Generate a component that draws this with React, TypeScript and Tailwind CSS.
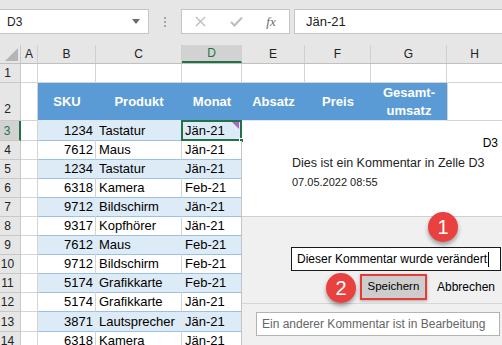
import React from "react";

const rows: [string, string, string][] = [
  ["1234", "Tastatur", "Jän-21"],
  ["7612", "Maus", "Jän-21"],
  ["1234", "Tastatur", "Jän-21"],
  ["6318", "Kamera", "Feb-21"],
  ["9712", "Bildschirm", "Jän-21"],
  ["9317", "Kopfhörer", "Jän-21"],
  ["7612", "Maus", "Feb-21"],
  ["9712", "Bildschirm", "Feb-21"],
  ["5174", "Grafikkarte", "Feb-21"],
  ["5174", "Grafikkarte", "Jän-21"],
  ["3871", "Lautsprecher", "Jän-21"],
  ["6318", "Kamera", "Jän-21"],
];

const heights = [20, 19, 19, 19, 19, 19, 19, 19, 19, 19, 20, 19];

function Badge({ n, className }: { n: string; className: string }) {
  return (
    <div
      className={
        "absolute w-[30px] h-[30px] rounded-full bg-[#e9413f] text-white text-[20px] leading-none flex items-center justify-center shadow-[0_3px_4px_rgba(0,0,0,0.35)] " +
        className
      }
    >
      {n}
    </div>
  );
}

export default function App() {
  return (
    <div className="relative w-[502px] h-[345px] overflow-hidden bg-white font-['Liberation_Sans',Arial,sans-serif] text-black">
      {/* Formula bar */}
      <div className="h-[45px] bg-[#e6e6e6] flex items-start pt-[9px]">
        <div className="w-[149px] h-[25px] bg-white border border-l-0 border-[#c6c6c6] flex items-center justify-between pl-[7px] pr-[8px] text-[12px] text-[#222]">
          <span>D3</span>
          <svg width="8" height="5" viewBox="0 0 8 5">
            <path d="M0 0 L8 0 L4 5 Z" fill="#6b6b6b" />
          </svg>
        </div>
        <div className="w-[32px] flex flex-col items-center gap-[2px] pt-[8px]">
          <div className="w-[2px] h-[2px] bg-[#a6a6a6]" />
          <div className="w-[2px] h-[2px] bg-[#a6a6a6]" />
          <div className="w-[2px] h-[2px] bg-[#a6a6a6]" />
        </div>
        <div className="w-[109px] h-[25px] bg-white border border-[#c6c6c6] flex items-center">
          <div className="w-[36px] flex justify-center">
            <svg width="11" height="11" viewBox="0 0 11 11">
              <path d="M1 1 L10 10 M10 1 L1 10" stroke="#bdbdbd" strokeWidth="1.4" />
            </svg>
          </div>
          <div className="w-[36px] flex justify-center">
            <svg width="13" height="11" viewBox="0 0 13 11">
              <path d="M1 6 L4.5 9.5 L12 1.5" stroke="#bdbdbd" strokeWidth="2" fill="none" />
            </svg>
          </div>
          <div className="w-[34px] flex justify-center font-['Liberation_Serif',serif] italic text-[13px] text-[#6a6a6a]">
            fx
          </div>
        </div>
        <div className="ml-[4px] flex-1 h-[25px] bg-white border border-r-0 border-[#c6c6c6] flex items-center pl-[11px] text-[13px] text-[#222]">
          Jän-21
        </div>
      </div>

      {/* Column headers */}
      <div className="h-[19px] flex bg-[#e6e6e6] text-[12px] text-[#222] border-b border-[#c0c0c0]">
        <div className="w-[21px] border-r border-[#c8c8c8] flex items-end justify-end pr-[2px] pb-[2px]">
          <svg width="13" height="13" viewBox="0 0 13 13">
            <path d="M13 0 L13 13 L0 13 Z" fill="#b5b5b5" />
          </svg>
        </div>
        <div className="w-[17px] border-r border-[#d0d0d0] flex items-center justify-center">A</div>
        <div className="w-[58px] border-r border-[#d0d0d0] flex items-center justify-center">B</div>
        <div className="w-[86px] border-r border-[#d0d0d0] flex items-center justify-center">C</div>
        <div className="w-[60px] border-r border-[#d0d0d0] bg-[#d2d2d2] border-b-2 border-b-[#217346] text-[#217346] flex items-center justify-center">
          D
        </div>
        <div className="w-[63px] border-r border-[#d0d0d0] flex items-center justify-center">E</div>
        <div className="w-[66px] border-r border-[#d0d0d0] flex items-center justify-center">F</div>
        <div className="w-[76px] border-r border-[#d0d0d0] flex items-center justify-center">G</div>
        <div className="flex-1 flex items-center justify-center">H</div>
      </div>

      {/* Row 1 */}
      <div className="h-[19px] flex">
        <div className="w-[21px] bg-[#e6e6e6] border-r border-b border-[#c8c8c8] text-[12px] text-[#222] flex items-center justify-center pr-[5px]">
          1
        </div>
        <div className="w-[17px] border-r border-b border-[#d4d4d4]" />
        <div className="w-[58px] border-r border-b border-[#d4d4d4]" />
        <div className="w-[86px] border-r border-b border-[#d4d4d4]" />
        <div className="w-[60px] border-r border-b border-[#d4d4d4]" />
        <div className="w-[63px] border-r border-b border-[#d4d4d4]" />
        <div className="w-[66px] border-r border-b border-[#d4d4d4]" />
        <div className="w-[76px] border-r border-b border-[#d4d4d4]" />
        <div className="flex-1 border-b border-[#d4d4d4]" />
      </div>

      {/* Row 2: table header */}
      <div className="h-[38px] flex">
        <div className="w-[21px] bg-[#e6e6e6] border-r border-b border-[#c8c8c8] text-[12px] text-[#222] flex items-end justify-center pr-[5px] pb-[2px]">
          2
        </div>
        <div className="w-[17px] border-r border-b border-[#d4d4d4]" />
        <div className="w-[409px] flex bg-[#5b9bd5] border-b border-[#dbe8f5] text-white font-bold text-[13px] leading-[18px]">
          <div className="w-[58px] flex items-center justify-center">SKU</div>
          <div className="w-[86px] flex items-center justify-center">Produkt</div>
          <div className="w-[60px] flex items-center justify-center">Monat</div>
          <div className="w-[63px] flex items-center justify-center">Absatz</div>
          <div className="w-[66px] flex items-center justify-center">Preis</div>
          <div className="w-[76px] flex flex-col items-center justify-center">
            <span>Gesamt-</span>
            <span>umsatz</span>
          </div>
        </div>
        <div className="flex-1 border-l border-b border-[#d4d4d4]" />
      </div>

      {/* Data rows + comment panel */}
      <div className="flex">
        <div className="w-[242px] flex flex-col text-[13px]">
          {rows.map((r, i) => {
            const n = i + 3;
            const striped = n % 2 === 1;
            const bg = striped ? "bg-[#ddebf7]" : "bg-white";
            const vr = striped ? "border-r-[#ddebf7]" : "border-r-[#d4d4d4]";
            const selected = n === 3;
            return (
              <div key={n} className="flex" style={{ height: heights[i] }}>
                <div
                  className={
                    "w-[21px] border-b border-[#c8c8c8] text-[12px] flex items-center justify-center pr-[5px] " +
                    (selected
                      ? "bg-[#d2d2d2] text-[#217346] border-r-2 border-r-[#217346]"
                      : "bg-[#e6e6e6] text-[#222] border-r border-r-[#c8c8c8]")
                  }
                >
                  {n}
                </div>
                <div className="w-[17px] border-r border-b border-[#d4d4d4]" />
                <div className={`w-[58px] ${bg} border-r ${vr} border-b border-b-[#9bc2e6] flex items-center justify-end pr-[2px]`}>
                  {r[0]}
                </div>
                <div className={`w-[86px] ${bg} border-r ${vr} border-b border-b-[#9bc2e6] flex items-center pl-[3px] whitespace-nowrap`}>
                  {r[1]}
                </div>
                <div className={`relative w-[60px] ${bg} border-r border-r-[#c4c4c4] border-b border-b-[#9bc2e6] flex items-center pl-[3px]`}>
                  {r[2]}
                  {selected && (
                    <>
                      <div className="absolute left-[-1px] top-[-1px] right-[-1px] bottom-[-1px] border-2 border-[#217346]" />
                      <svg className="absolute right-[2px] top-[1px]" width="7" height="7" viewBox="0 0 7 7">
                        <path d="M0 0 L7 0 L7 7 Z" fill="#b162c9" />
                      </svg>
                      <div className="absolute right-[-3px] bottom-[-3px] w-[5px] h-[5px] bg-[#217346] border border-white" />
                    </>
                  )}
                </div>
              </div>
            );
          })}
        </div>

        {/* Comment panel */}
        <div className="flex-1 h-[224px] flex flex-col font-['Liberation_Sans',Arial,sans-serif]">
          <div className="h-[95px] bg-white flex flex-col">
            <div className="text-right pr-[4px] pt-[15px] text-[12px] leading-[14px]">D3</div>
            <div className="pl-[50px] mt-[4px] text-[12.5px] leading-[19px] text-[#222]">
              Dies ist ein Kommentar in Zelle D3
            </div>
            <div className="pl-[50px] text-[11px] leading-[19px] text-[#222]">07.05.2022 08:55</div>
          </div>
          <div className="flex-1 bg-[#f0f0f0] border-t border-[#d0d0d0] flex flex-col">
            <div className="mt-[30px] ml-[49px] mr-[1px] h-[24px] bg-white border border-[#1a1a1a] flex items-center pl-[5px] text-[12px]">
              Dieser Kommentar wurde verändert
              <span className="ml-[1px] w-[1px] h-[15px] bg-black" />
            </div>
            <div className="mt-[3px] h-[26px] flex items-center justify-end pr-[7px] gap-[10px] text-[12px]">
              <div className="w-[67px] h-[26px] border-2 border-[#e63b3b] shadow-[0_1px_3px_rgba(0,0,0,0.3)] bg-[#cdcdcd] flex items-center justify-center text-[11.5px]">
                Speichern
              </div>
              <div>Abbrechen</div>
            </div>
            <div className="mt-[3px] border-t border-[#d6d6d6]" />
            <div className="mt-[8px] ml-[14px] mr-[2px] h-[24px] bg-white border border-[#b3b3b3] flex items-center pl-[5px] text-[12px] text-[#666]">
              Ein anderer Kommentar ist in Bearbeitung
            </div>
          </div>
        </div>
      </div>

      <Badge n="1" className="left-[428px] top-[212px]" />
      <Badge n="2" className="left-[326px] top-[273px]" />
    </div>
  );
}
